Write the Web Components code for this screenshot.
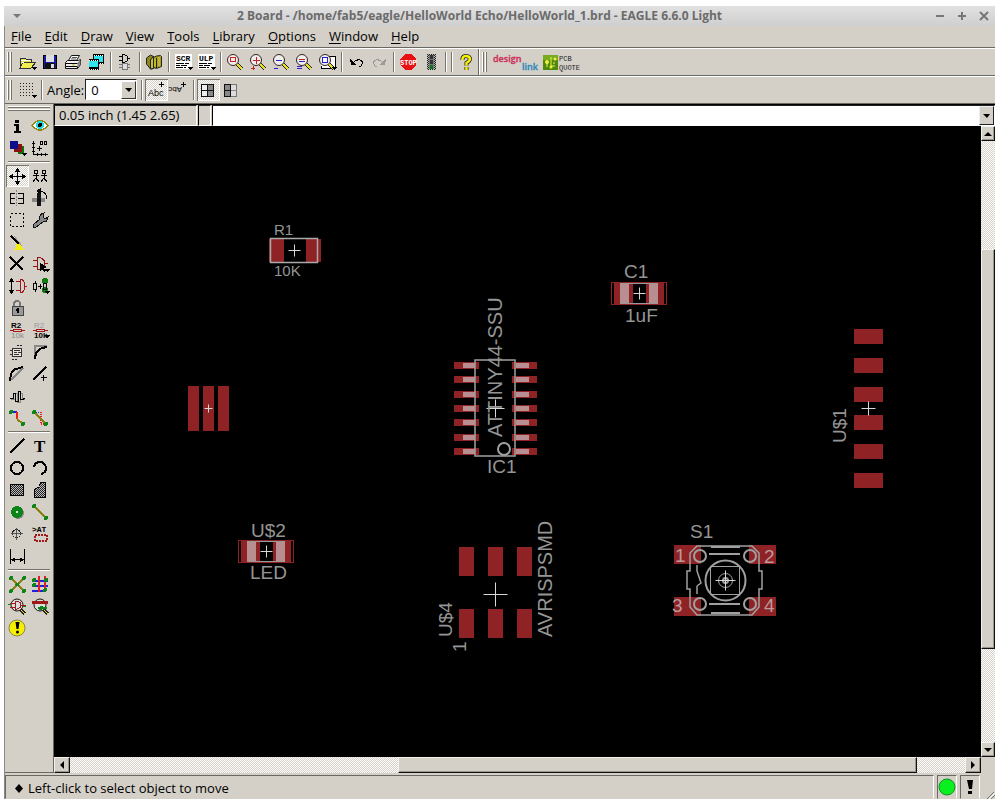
<!DOCTYPE html>
<html lang="en">
<head>
<meta charset="utf-8">
<title>2 Board - EAGLE 6.6.0 Light</title>
<style>
  :root {
    --face: #d4d0c8;
    --dark: #6a6862;
    --checker: repeating-conic-gradient(#fff 0 25%, #d4d0c8 0 50%) 0 0 / 2px 2px;
  }
  html, body { height: 100%; margin: 0; }
  body { background: #fff; font: 13px/18px "Open Sans", "Noto Sans", sans-serif; color: #000; }
</style>
</head>
<body>
<eagle-app></eagle-app>
<script>
const BLACK = 'stroke="#000" fill="none"';
const lens = '<path d="M12 12l6 6" stroke="#222" stroke-width="4"/><path d="M13 13l5 5" stroke="#e8e020" stroke-width="2"/><circle cx="9" cy="9" r="5.500" fill="#eee" stroke="#3a2020" shape-rendering="auto"/>';
const tri = '<path d="M15 16h6l-3 3z" fill="#000"/>';
const checkDefs = '<defs><pattern id="c" width="2" height="2" patternUnits="userSpaceOnUse"><rect width="2" height="2" fill="#bbb"/><path d="M0 0h1v1h-1zM1 1h1v1h-1z" fill="#222"/></pattern></defs>';
const dots = (pts, r, col) => pts.map(p => `<circle cx="${p[0]}" cy="${p[1]}" r="${r}" fill="${col}"/>`).join('');
const page = t => `<rect x="3" y="3" width="17" height="15" fill="#fff"/><text x="4" y="10" font-size="8" font-weight="bold" font-family="Liberation Mono, monospace">${t}</text><path d="M4 12.500h8m1 0h4M4 14.500h4m1 0h6M4 16.500h7m1 0h2" ${BLACK}/>${tri}`;
const person = x => `<circle cx="${x}" cy="7" r="2" ${BLACK}/><path d="M${x} 9v5M${x-3} 10.500h6M${x} 13l-3 4M${x} 13l3 4" ${BLACK}/>`;
const ICONS = {
  open: '<path d="M4 16V8l1-1h4l1 1h5v3" fill="#e4df50" stroke="#333"/><path d="M4 17l3-6h13l-5 6z" fill="#f2ee50" stroke="#333"/><path d="M5 9h9M6 11h2" stroke="#fff"/>' + tri,
  save: '<rect x="4" y="4" width="14" height="14" fill="#000"/><rect x="5" y="5" width="12" height="12" fill="#1c1ca0"/><rect x="7" y="4" width="8" height="7" fill="#ddd"/><rect x="6" y="12" width="10" height="6" fill="#111"/><rect x="12" y="13" width="3" height="4" fill="#ddd"/>',
  print: '<g shape-rendering="auto"><path d="M6.500 9.500l3-5h8l-3 5z" fill="#fff" stroke="#111"/><path d="M10 6.500h5M9 8h5" stroke="#555"/><path d="M3.500 11.500l2-2h11l2-1v5l-3 4h-12z" fill="#eee" stroke="#111"/><path d="M4 12.500h11.500l3-3M4 15.500h11.500v2" ' + BLACK + '/><path d="M15.500 12v4l3-3V9z" fill="#888"/><rect x="10" y="13.500" width="3" height="1" fill="#bb0"/></g>',
  film: '<rect x="8" y="3" width="11" height="10" fill="#000"/><rect x="9" y="5" width="9" height="6" fill="#2fe4ee"/><path d="M9 4h9M9 12h9" stroke="#fff" stroke-dasharray="1 1"/><rect x="4" y="8" width="10" height="11" fill="#000"/><rect x="4" y="10" width="9" height="6" fill="#2fe4ee"/><path d="M4 9h9M4 18h9" stroke="#fff" stroke-dasharray="1 1"/>',
  gate: '<path d="M5 5.500h3M5 9.500h3M8 3.500h2q4 1 4 4t-4 4H8zM14 7.500h2" '+BLACK+'/><path d="M8 12.500h5v6H8zM5 13.500h3M5 16.500h3M13 13.500h3M13 16.500h3" stroke="#777" fill="#ddd"/>',
  book: '<g shape-rendering="auto"><path d="M3.500 7l4-3 3 1.500v12l-3 .5-4-5z" fill="#8e8818" stroke="#222"/><path d="M7.500 9l3-4v12.500l-3 .5z" fill="#c8c030" stroke="#222"/><path d="M10.500 6.500l3-1.500 4-.5 1 1v10l-5 2-3-1z" fill="#a8a020" stroke="#222"/><path d="M13.500 7v10" stroke="#222"/><path d="M12 7.500v8M16 6v9" stroke="#d8d040"/></g>',
  scr: page('SCR'), ulp: page('ULP'),
  zfit: lens + '<rect x="6.500" y="6.500" width="5" height="4" fill="none" stroke="#c22"/>',
  zin: lens + '<path d="M6 9.500h7M9.500 6v7M4 17.500h4M6 15v4" stroke="#c02020"/>',
  zout: lens + '<path d="M6 9.500h6M4 17.500h4" stroke="#2020c0"/>',
  zredraw: lens + '<path d="M6 8.500h6" stroke="#c02020"/><path d="M6 10.500h6M4 15.500h5M4 17.500h5" stroke="#3020c0"/>',
  zsel: '<path d="M12 5h7v12H5v-2" fill="#fff" stroke="#000"/>' + lens + '<rect x="6.500" y="6.500" width="5" height="5" fill="#fff" stroke="#22c"/>' + tri,
  undo: '<path d="M5 8l1 6h6z" fill="#000"/><path d="M8 12q3-4 7-3t1 6l-2 1" stroke="#000" fill="none"/>',
  redo: '<path d="M18 8l-1 6h-6z" fill="#999"/><path d="M15 12q-3-4-7-3t-1 6l2 1" stroke="#999" fill="none"/>',
  stop: '<path d="M8 3h6l5 5v6l-5 5H8l-5-5V8z" fill="#e81010"/><text x="3" y="14" font-size="7" font-weight="bold" fill="#fff" font-family="Liberation Mono, monospace">STOP</text>',
  traffic: checkDefs + '<rect x="7" y="3" width="9" height="16" fill="url(#c)"/><rect x="9" y="4" width="5" height="14" fill="#777"/><circle cx="11.500" cy="6" r="2" fill="#333"/><circle cx="11.500" cy="11" r="2" fill="#333"/><circle cx="11.500" cy="16" r="2" fill="#087c18"/>',
  help: '<g shape-rendering="auto" fill="none"><path d="M7.500 9V7.500Q8 5 11 5t4 2.500q0 2.500-3.500 4.500v2.500M11.500 16v3" stroke="#222" stroke-width="4"/><path d="M7.500 9V7.500Q8 5 11 5t4 2.500q0 2.500-3.500 4.500v2.500M11.500 16v3" stroke="#f8f400" stroke-width="2.500"/></g>',
  grid: '<path d="M4 4.500h14M4 7.500h14M4 10.500h14M4 13.500h14M4 16.500h10" stroke="#222" stroke-dasharray="1 2"/>' + tri,
  abc: '<text x="3" y="17" font-size="9" font-family="Liberation Sans, sans-serif">Abc</text><path d="M14 5.500h5M16.500 3v5" stroke="#000"/>',
  abcflip: '<text x="-14" y="-8" transform="rotate(180)" font-size="8" font-family="Liberation Sans, sans-serif">Abc</text><path d="M13 5.500h5M15.500 3v5" stroke="#000"/>',
  split1: '<path d="M4.500 5.500h6v12h-6zM4 11.500h6" stroke="#111" fill="#eee"/><path d="M10.500 5.500h6v12h-6z" fill="#888" stroke="#111"/><path d="M10 11.500h7" stroke="#111"/>',
  split2: '<path d="M4.500 5.500h12v12h-12z" stroke="#777" fill="#ddd"/><path d="M4.500 5.500h6v12h-6z" fill="#888" stroke="#111"/><path d="M4 11.500h7" stroke="#111"/><path d="M11 11.500h6" stroke="#888"/>',
  info: '<rect x="9" y="5" width="4" height="3"/><path d="M8 9h5v7h2v2H8v-2h2v-5H8z"/>',
  eye: '<path d="M3 10.500q8-10 16 0q-8 9-16 0z" fill="#fff" stroke="#8a8a10" stroke-width="1.500"/><circle cx="11" cy="10" r="4" fill="#20d8e8"/><circle cx="11" cy="10" r="2" fill="#000"/>',
  layers: '<rect x="12" y="9" width="6" height="8" fill="#107010"/><rect x="8" y="7" width="8" height="8" fill="#8a1010"/><rect x="4" y="4" width="8" height="8" fill="#10108a"/>' + tri,
  mark: '<path d="M4.500 4v14M4 17.500h15" stroke="#000"/><path d="M3 6.500h3M3 10.500h3M3 14.500h3M8.500 16v3M12.500 16v3M16.500 16v3" stroke="#000"/><path d="M8 11.500h5M10.500 9v5" stroke="#000"/><path d="M11.500 4.500h2v3h-2zM15.500 4.500h2v3h-2z" '+BLACK+'/>',
  move: '<path d="M4 11.500h15M11.500 4v15" stroke="#000"/><path d="M3 11.500l4-3v6zM20 11.500l-4-3v6zM11.500 3l-3 4h6zM11.500 20l-3-4h6z"/>',
  copy: person(7) + person(15),
  mirror: '<path d="M9 6.500H4.500v10H9M4 11.500h5" '+BLACK+'/><path d="M10.500 3v16" stroke="#888" stroke-dasharray="2 1"/><path d="M12 6.500h5v10h-5M12 11.500h5" '+BLACK+'/>',
  rotate: '<rect x="8" y="6" width="4" height="13" fill="#111"/><rect x="3" y="11" width="13" height="4" fill="#888"/><rect x="8" y="11" width="4" height="4" fill="#111"/><path d="M8 4.500h5q5 2 5 7" '+BLACK+'/><path d="M7 4l5-3v6z"/>',
  group: '<rect x="4.500" y="4.500" width="13" height="13" fill="none" stroke="#000" stroke-dasharray="2 2"/>',
  wrench: '<path d="M4 16l7-6q-1-5 4-6l-1 4 2 2 3-2q0 5-5 5l-7 5-3 1z" fill="#888" stroke="#111"/>',
  change: '<path d="M5 5l9 9" stroke="#000" stroke-width="2"/><path d="M8 5l8 10" stroke="#999"/><path d="M10 13h4l4 6H7l3-2z" fill="#f4ee10"/>',
  delete: '<path d="M4 4l13 13M17 4L4 17" stroke="#000" stroke-width="2"/>',
  add: '<path d="M4 7.500h4M4 13.500h4M8 4.500h3q5 2 5 6t-5 6H8zM16 10.500h3" stroke="#8c1414" fill="none"/><path d="M11 10l7 4-3 1 2 3-2 1-2-3-2 2z"/>' + tri,
  pinswap: '<path d="M5.500 5v12" stroke="#000"/><path d="M5.500 3l-3 4h6zM5.500 19l-3-4h6z"/><path d="M10 6.500h4M10 15.500h4M14 4v14M14 4q5 1 5 7t-5 7M18 11h3" stroke="#a01818" fill="none"/>',
  replace: '<ellipse cx="16" cy="6" rx="3" ry="3" fill="#107c10"/><ellipse cx="16" cy="15" rx="3" ry="3" fill="#107c10"/><path d="M4.500 8.500h3v6h-3zM14.500 8.500h3v6h-3zM6 6v2M6 15v2M9 11.500h4M11.500 9v5" '+BLACK+'/>' + tri,
  lock: '<path d="M8 10V7q0-3 3-3t3 3v3" stroke="#777" stroke-width="2" fill="none"/><rect x="6" y="9" width="11" height="9" fill="#999" stroke="#444"/><path d="M11.500 11v5M10 12.500h3" stroke="#000" stroke-width="2"/>',
  name: '<text x="5" y="9" font-size="8" font-weight="bold" font-family="Liberation Sans, sans-serif">R2</text><path d="M4 11.500h15" stroke="#a01818"/><rect x="7.500" y="10.500" width="8" height="2" fill="#d4d0c8" stroke="#a01818"/><text x="5" y="19" font-size="8" fill="#888" font-family="Liberation Sans, sans-serif">10k</text>',
  value: '<text x="5" y="9" font-size="8" fill="#999" font-family="Liberation Sans, sans-serif">R2</text><path d="M4 11.500h15" stroke="#a01818"/><rect x="7.500" y="10.500" width="8" height="2" fill="#d4d0c8" stroke="#a01818"/><text x="5" y="19" font-size="8" font-weight="bold" font-family="Liberation Sans, sans-serif">10k</text>' + tri,
  smash: '<rect x="6.500" y="7.500" width="9" height="8" fill="#e8e4dc" stroke="#333"/><path d="M11 4.500h6M6 18.500h6" stroke="#222" stroke-dasharray="2 1"/><path d="M4 9.500h2M4 13.500h2M8 9.500h6M8 11.500h3M12 11.500h3M8 13.500h5" stroke="#333"/>',
  miter: '<path d="M6 18V5h12" stroke="#888" fill="none" stroke-width="2"/><path d="M6 18q0-11 12-12" stroke="#000" stroke-width="2" fill="none"/>',
  split: '<path d="M5 17L17 5" stroke="#888" stroke-width="2"/><path d="M4 18q1-12 6-12l7-2" stroke="#000" stroke-width="2" fill="none"/>',
  optimize: '<path d="M4 17L17 4" stroke="#000" stroke-width="2"/><path d="M12 14.500h6M14.500 12v6" stroke="#000"/>',
  meander: '<path d="M5 14.500h4v-6h2v9h3v-9h2v6h3" stroke="#888" fill="none"/><path d="M4 13.500h3v-5h2v8h3v-10h2v8h3v-1h2" '+BLACK+'/>',
  route: '<path d="M5 5h6" stroke="#2020e0" stroke-width="2"/><path d="M11 5v7" stroke="#f02010" stroke-width="2"/><path d="M11 12l6 5" stroke="#8a8010" stroke-width="2"/>' + dots([[5,5],[17,17]],2,'#0b8418'),
  ripup: '<path d="M5 5h7" stroke="#2020e0" stroke-dasharray="1 1"/><path d="M12 5v12h5" stroke="#e02020" stroke-dasharray="1 1" fill="none" stroke-width="2"/><path d="M5 5l12 12" stroke="#8a8010" stroke-width="2"/>' + dots([[5,5],[17,17]],2,'#0b8418'),
  wire: '<path d="M4 18L18 4" stroke="#000" stroke-width="2"/>',
  text: '<text x="5" y="17" font-size="17" font-weight="bold" font-family="Liberation Serif, serif">T</text>',
  circle: '<circle cx="11" cy="11" r="6" stroke="#000" stroke-width="2" fill="none"/>',
  arc: '<path d="M5 10q1-5 6-5t6 6q0 5-5 6" stroke="#000" stroke-width="2" fill="none"/>',
  rect: checkDefs + '<rect x="4.500" y="5.500" width="13" height="11" fill="url(#c)" stroke="#000"/>',
  polygon: checkDefs + '<path d="M5.500 18.500v-8l5-3 1-4h5v15z" fill="url(#c)" stroke="#000"/>',
  via: '<circle cx="12" cy="12" r="6" fill="#888"/><circle cx="11" cy="11" r="6" fill="#0b8418"/><rect x="10" y="10" width="2" height="2" fill="#ddd"/>',
  signal: '<path d="M5 5l12 12" stroke="#8a8010" stroke-width="1.500"/>' + dots([[5,5],[17,17]],2,'#0b8418'),
  hole: '<circle cx="10.500" cy="10.500" r="4" stroke="#222" fill="none"/><path d="M5 10.500h12M10.500 5v12" stroke="#555"/>',
  attribute: '<text x="3" y="9" font-size="8" font-family="Liberation Mono, monospace" font-weight="bold">&gt;AT</text><rect x="5.500" y="11.500" width="12" height="6" fill="none" stroke="#a01818" stroke-width="2" stroke-dasharray="2 1"/>',
  dimension: '<path d="M4.500 4v15M18.500 4v15M5 14.500h13" stroke="#000"/><path d="M5 14.500l4-2v5zM18 14.500l-4-2v5z"/>',
  ratsnest: '<path d="M5 5l13 13M18 5L5 18" stroke="#8a8010" stroke-width="1.500"/>' + dots([[5,5],[18,5],[5,18],[18,18],[11.5,11.5]],2,'#0b8418'),
  auto: '<path d="M3 7.500h16M5 12.500h14M3 17.500h14" stroke="#2020e0" stroke-width="2"/><path d="M9.500 3v16M15.500 3v16" stroke="#e02020" stroke-width="2"/>' + dots([[5,7],[17,7],[5,12],[16,17]],2,'#0b8418'),
  erc: '<path d="M14 14l5 5" stroke="#222" stroke-width="3"/><path d="M15 15l4 4" stroke="#e8e020"/><circle cx="11" cy="10" r="6" fill="#ddd" stroke="#111" shape-rendering="auto"/><path d="M4 8.500h5M4 12.500h5M9 6v8h2q4-1 4-4t-4-4zM15 10.500h5" stroke="#a01818" fill="none"/><path d="M2 9.500h3M17 11.500h3" stroke="#0b8418"/>',
  drc: '<path d="M14 14l5 5" stroke="#222" stroke-width="3"/><path d="M15 15l4 4" stroke="#e8e020"/><circle cx="11" cy="10" r="6" fill="#ddd" stroke="#111" shape-rendering="auto"/><path d="M3 7.500h16" stroke="#a01818" stroke-width="3"/><path d="M9 12.500h9" stroke="#0b8418" stroke-width="2"/>' + dots([[12,13]],2,'#0b8418'),
  errors: '<g shape-rendering="auto"><circle cx="11" cy="11" r="8" fill="#f6f000" stroke="#8a8a40"/><path d="M9.500 5h4l-1 7h-2z"/><circle cx="11.500" cy="15" r="1.500"/></g>'
};

function define(tag, markup, setup) {
  const template = document.createElement('template');
  template.innerHTML = markup;
  customElements.define(tag, class extends HTMLElement {
    constructor() {
      super();
      this.attachShadow({ mode: 'open' }).append(template.content.cloneNode(true));
    }
    connectedCallback() { if (setup) setup(this, this.shadowRoot); }
  });
}

define('tool-button', `<style>
  :host { display: block; width: 23px; height: 22px; flex: none; }
  button { display: block; width: 100%; height: 100%; padding: 0; border: 0; background: none; }
  :host([pressed]) button { background: var(--checker); box-shadow: inset 1px 1px #77746c, inset -1px -1px #fff; }
  svg { display: block; width: 23px; height: 22px; }
</style><button type="button"><svg viewBox="0 0 23 22" shape-rendering="crispEdges" aria-hidden="true"></svg></button>`,
(host, root) => {
  const n = host.getAttribute('name');
  root.querySelector('svg').innerHTML = ICONS[n];
  root.querySelector('button').setAttribute('aria-label', host.getAttribute('label') || n);
  if (host.hasAttribute('pressed')) root.querySelector('button').setAttribute('aria-pressed', 'true');
});

define('tool-rule', `<style>
  :host { display: flex; justify-content: center; width: 6px; height: 20px; flex: none; }
  i { width: 1px; background: #77746c; border-right: 1px solid #fff; }
  :host([flat]) { width: auto; height: 6px; align-items: center; padding: 0 2px; grid-column: 1 / -1; }
  :host([flat]) i { width: 100%; height: 1px; border: 0; border-bottom: 1px solid #fff; }
</style><i></i>`);

define('tool-grip', `<style>
  :host { display: flex; gap: 1px; width: 11px; height: 20px; padding-left: 2px; box-sizing: border-box; flex: none; }
  i { width: 1px; background: #fff; border-right: 1px solid #77746c; }
  :host([flat]) { flex-direction: column; width: auto; height: 11px; padding: 2px 2px 0; grid-column: 1 / -1; }
  :host([flat]) i { width: 100%; height: 1px; border: 0; border-bottom: 1px solid #77746c; }
</style><i></i><i></i>`);

define('title-bar', `<style>
  :host { display: flex; align-items: center; height: 20px; background: linear-gradient(#e1e1e1, #cfcfcf); color: #6b6b6b; }
  h1 { flex: 1; margin: 0; text-align: center; font-size: 12px; line-height: 20px; font-weight: 700; white-space: nowrap; overflow: hidden; }
  button { width: 22px; height: 20px; padding: 0; border: 0; background: none; color: inherit; }
  .menu { width: 26px; }
  svg { display: block; margin: auto; }
</style>
<button class="menu" aria-label="Window menu"><svg width="8" height="5"><path d="M0 0h8l-4 4z" fill="#777"/></svg></button>
<h1><slot></slot></h1>
<button aria-label="Minimize"><svg width="10" height="10"><path d="M1 5h8" stroke="#777" stroke-width="2"/></svg></button>
<button aria-label="Maximize"><svg width="10" height="10"><path d="M1 5h8M5 1v8" stroke="#777" stroke-width="2"/></svg></button>
<button aria-label="Close"><svg width="10" height="10"><path d="M1 1l8 8M9 1l-8 8" stroke="#777" stroke-width="2"/></svg></button>`);

define('menu-entry', `<style>
  :host { display: block; }
  button { display: block; border: 0; padding: 0; background: none; font: inherit; color: inherit; line-height: 21px; }
</style><button type="button"><slot></slot></button>`);

define('menu-strip', `<style>
  :host { display: flex; gap: 13px; height: 21px; padding: 0 6px; }
</style><slot></slot>`);

define('tool-strip', `<style>
  :host { display: flex; align-items: center; height: 27px; border-top: 1px solid var(--dark); box-shadow: inset 0 1px #fff; }
</style><slot></slot>`);

define('angle-select', `<style>
  :host { display: flex; align-items: center; padding-left: 2px; gap: 1px; margin-right: 2px; }
  .box { display: grid; }
  select { grid-area: 1 / 1; appearance: none; width: 52px; height: 21px; padding: 0 0 0 5px; font: inherit; color: #000; background: #fff; border: 1px solid; border-color: #222 #fff #fff #222; border-radius: 0; }
  span { grid-area: 1 / 1; justify-self: end; align-self: center; display: grid; place-items: center; width: 15px; height: 18px; background: var(--face); border: 1px solid; border-color: #fff #333 #333 #fff; box-sizing: border-box; margin-right: 1px; pointer-events: none; }
</style><label for="a">Angle:</label><div class="box"><select id="a"><option>0</option><option>45</option><option>90</option></select><span><svg width="7" height="4"><path d="M0 0h7l-3 4z"/></svg></span></div>`);

define('partner-links', `<style>
  :host { display: flex; align-items: center; gap: 4px; margin-left: 2px; }
  a { display: block; color: inherit; }
  svg { display: block; }
</style>
<a href="#design-link" aria-label="design link"><svg width="46" height="24" font-family="Open Sans, sans-serif" font-weight="600">
  <text x="0" y="12" font-size="9" fill="#cc2c58" stroke="#cc2c58" stroke-width=".3">design</text>
  <text x="29" y="20" font-size="9" fill="#2c88b8" stroke="#2c88b8" stroke-width=".3">link</text></svg></a>
<a href="#pcb-quote" aria-label="PCB quote"><svg width="40" height="24" font-family="Liberation Mono, monospace" font-size="7" fill="#222">
  <rect y="5" width="15" height="15" fill="#4f8a10"/><rect y="5" width="15" height="5" fill="#78ac20"/>
  <path d="M4 12v5M8 7v9M8 16h4M11 12v2" stroke="#eef040" fill="none"/><circle cx="4" cy="12" r="2" fill="#eef040"/><circle cx="12" cy="9" r="1.500" fill="#eef040"/><circle cx="8" cy="17" r="1.500" fill="#eef040"/>
  <text x="16" y="11">PCB</text><text x="16" y="20">QUOTE</text></svg></a>`);

define('side-palette', `<style>
  :host { display: grid; grid-template-columns: 23px 23px; align-content: start; padding: 0 1px; border-right: 1px solid var(--dark); border-bottom: 1px solid var(--dark); }
</style><slot></slot>`);

define('command-line', `<style>
  :host { display: flex; height: 22px; gap: 1px; box-sizing: border-box; border-top: 1px solid #000; background: var(--face); }
  div, .entry { box-sizing: border-box; border: 1px solid; border-color: #222 #fff #fff #000; }
  div { width: 143px; padding-left: 4px; line-height: 19px; white-space: nowrap; }
  .gap { width: 13px; padding: 0; }
  .entry { display: flex; flex: 1; background: #fff; }
  input { flex: 1; min-width: 0; border: 0; outline: 0; padding: 0 4px; font: inherit; background: #fff; }
  button { width: 15px; padding: 0; background: var(--face); border: 1px solid; border-color: #eee #222 #222 #eee; }
  svg { display: block; margin: auto; }
</style><div>0.05 inch (1.45 2.65)</div><div class="gap"></div>
<span class="entry"><input type="text" aria-label="Command"><button aria-label="Command history"><svg width="7" height="4"><path d="M0 0h7l-3 4z"/></svg></button></span>`);

define('scroll-strip', `<style>
  :host { display: flex; min-width: 0; min-height: 0; background: var(--checker); }
  :host([vertical]) { flex-direction: column; }
  button, .thumb { box-sizing: border-box; background: var(--face); border: 1px solid; border-color: #f4f2ee #111 #111 #f4f2ee; box-shadow: inset -1px -1px #99958c; }
  button { flex: none; width: 16px; height: 16px; padding: 0; }
  :host([vertical]) button { width: 14px; height: 15px; }
  svg { display: block; margin: auto; }
  .before { flex: 329; } .thumb { flex: 518; } .after { flex: 48; }
  :host([vertical]) .before { flex: 108; } :host([vertical]) .thumb { flex: 400; } :host([vertical]) .after { flex: 93; }
</style><button aria-label="Scroll back"><svg width="8" height="8"><path/></svg></button><span class="before"></span><span class="thumb"></span><span class="after"></span><button aria-label="Scroll forward"><svg width="8" height="8"><path/></svg></button>`,
(host, root) => {
  const v = host.hasAttribute('vertical');
  const p = root.querySelectorAll('path');
  p[0].setAttribute('d', v ? 'M0 6h8l-4-4z' : 'M6 0v8l-4-4z');
  p[1].setAttribute('d', v ? 'M0 2h8l-4 4z' : 'M2 0v8l4-4z');
});

const RED = '#8e2225', PINK = '#b78f90';
const R = (x, y, w, h, f = RED) => `<rect x="${x}" y="${y}" width="${w}" height="${h}" fill="${f}"/>`;
const X = (x, y, a) => `<path d="M${x - a} ${y}h${2 * a}M${x} ${y - a}v${2 * a}" stroke="#d8d8d8"/>`;
const V = (x, y, s, t) => `<text transform="translate(${x} ${y}) rotate(-90)" font-size="${s}">${t}</text>`;
const chip = (x, y) => `<g transform="translate(${x} ${y})">
  <rect x=".5" y=".5" width="55" height="22" fill="none" stroke="${RED}"/>${R(3,1,50,21)}${R(9,1,9,21,PINK)}${R(38,1,9,21,PINK)}${R(22,1,13,21,'#000')}
  <path d="M9 1.500h38M9 21.500h38" stroke="#999"/>${X(28.5,11.5,6)}</g>`;
let pads = '';
for (const y of [362, 376, 391, 405, 419, 434, 448]) pads += R(454,y,25,7) + R(463,y+1,12,5,PINK) + R(512,y,25,7) + R(516,y+1,13,5,PINK);
for (const x of [188, 203, 218]) pads += R(x,386,11,45);
for (const x of [459, 488, 517]) pads += R(x,547,15,29) + R(x,609,15,29);
for (const y of [329, 358, 387, 415, 444, 473]) pads += R(854,y,29,15);
for (const x of [674, 749]) pads += R(x,545,27,19) + R(x,597,27,19);

define('board-canvas', `<style>
  :host { display: block; min-width: 0; min-height: 0; background: #000; overflow: hidden; }
  svg { display: block; width: 100%; height: 100%; }
</style>
<svg viewBox="54 126 927 631" role="img" aria-label="Board layout" font-family="Liberation Sans, Arial, sans-serif" font-size="19" fill="#959595">
  ${pads}
  ${R(269,239,15,23)}${R(306,239,15,23)}<rect x="270.500" y="238.500" width="47" height="24" fill="none" stroke="#aaa" stroke-width="1.500"/>${X(294.5,250.5,6)}
  <text x="274" y="235" font-size="15">R1</text><text x="274" y="276" font-size="15">10K</text>
  ${X(208.5,408.5,4)}
  ${chip(238,540)}${chip(611,282)}
  <text x="251" y="537">U$2</text><text x="250" y="579">LED</text>
  <text x="624" y="278">C1</text><text x="625" y="322">1uF</text>
  <rect x="475" y="360" width="40" height="96" fill="none" stroke="#a0a0a0" stroke-width="1.500"/><circle cx="504" cy="449" r="6" fill="none" stroke="#a0a0a0" stroke-width="2"/>
  ${X(495.5,408.5,9)}<text x="487" y="473">IC1</text>${V(502,437,20,'ATTINY44-SSU')}
  ${X(495.5,594.5,12)}${V(552,637,20,'AVRISPSMD')}${V(452,637,19,'U$4')}${V(466,652,19,'1')}
  ${X(868.5,408.5,7)}${V(846,443,19,'U$1')}
  <text x="690" y="538">S1</text>
  <g fill="none" stroke="#a0a0a0" stroke-width="2">
    <path d="M697 546h55l7 7v18h3v18h-3v18l-7 8h-55l-7-8v-18h-3v-18h3v-18z" stroke-width="1.500"/>
    <path d="M711 547h29M709 554h31M709 604h31M711 613h29"/>
    <circle cx="700" cy="556" r="6"/><circle cx="750" cy="556" r="6"/><circle cx="700" cy="604" r="6"/><circle cx="750" cy="604" r="6"/>
    <circle cx="725.500" cy="580.500" r="20"/>
    <path d="M697 565v6l4 12-4 3M697 586v8" stroke-width="1.500"/>
    <path d="M710.500 566.500h29v28h-29z" stroke-width="1"/>
    <circle cx="725.500" cy="580.500" r="7" stroke-width="1"/><circle cx="725.500" cy="580.500" r="2.500"/>
  </g>${X(725.5,580.5,10)}
  <g fill="#bb9a9a"><text x="675" y="562">1</text><text x="764" y="563">2</text><text x="672" y="612">3</text><text x="764" y="612">4</text></g>
</svg>`);

define('status-line', `<style>
  :host { display: flex; gap: 3px; height: 24px; margin-top: 2px; line-height: 25px; }
  div { box-sizing: border-box; border: 1px solid; border-color: var(--dark) #fff transparent var(--dark); }
  .msg { flex: 1; padding-left: 8px; white-space: nowrap; display: flex; gap: 4px; }
  .lamp { width: 20px; display: grid; place-items: center; }
  .size { width: 12px; border: 0; display: flex; align-items: end; justify-content: end; }
  svg { display: block; }
  .msg svg { margin-top: 7px; }
</style><div class="msg"><svg width="10" height="11" aria-hidden="true"><path d="M5 1l4 4.500-4 4.500-4-4.500z"/></svg><span><slot></slot></span></div>
<div class="lamp"><svg width="18" height="18"><circle cx="9" cy="9" r="8" fill="#08f020" stroke="#159020"/></svg></div>
<div class="lamp"><svg width="18" height="18"><path d="M6 2h6l-1 9H8z"/><rect x="7" y="13" width="4" height="3"/></svg></div>
<div class="size"><svg width="8" height="7"><path d="M0 7l7-7M4 7l4-4" stroke="#777" /><path d="M2 7l6-6" stroke="#fff"/></svg></div>`);

const B = (n, extra = '') => n.split(' ').map(x => `<tool-button name="${x}" ${extra}></tool-button>`).join('');
const S = '<tool-rule></tool-rule>', F = '<tool-rule flat></tool-rule>';
const menus = ['File','Edit','Draw','View','Tools','Library','Options','Window','Help'].map(m => `<menu-entry><u>${m[0]}</u>${m.slice(1)}</menu-entry>`).join('');

define('eagle-app', `<style>
  :host { display: flex; box-sizing: border-box; height: 100%; min-height: 400px; padding: 6px 4px; }
  main { flex: 1; min-width: 0; display: flex; flex-direction: column; background: var(--face); }
  .body { flex: 1; min-width: 0; display: flex; flex-direction: column; border-left: 1px solid #8c8a84; }
  u { text-underline-offset: 2px; }
  .work { flex: 1; min-height: 0; display: grid; grid-template: 22px minmax(0, 1fr) 16px / auto minmax(0, 1fr) 14px; border-top: 1px solid var(--dark); }
  side-palette { grid-row: 1 / -1; }
  command-line { grid-column: 2 / -1; }
  .plugin { display: flex; align-items: center; border-left: 1px solid var(--dark); box-shadow: inset 1px 0 #fff; padding-left: 1px; height: 26px; }
</style>
<main>
  <title-bar>2 Board - /home/fab5/eagle/HelloWorld Echo/HelloWorld_1.brd - EAGLE 6.6.0 Light</title-bar>
  <div class="body">
    <menu-strip>${menus}</menu-strip>
    <tool-strip><tool-grip></tool-grip>${B('open save print film')}${S}${B('gate')}${S}${B('book')}${S}${B('scr ulp')}${S}${B('zfit zin zout zredraw zsel')}${S}${B('undo redo')}${S}${B('stop traffic')}${S}${S}${B('help')}<span class="plugin"><tool-grip></tool-grip><partner-links></partner-links></span></tool-strip>
    <tool-strip><tool-grip></tool-grip>${B('grid')}${S}<angle-select></angle-select>${S}${B('abc','pressed')}${B('abcflip')}${S}${B('split1','pressed')}${B('split2')}</tool-strip>
    <div class="work">
      <side-palette><tool-grip flat></tool-grip>${B('info eye layers mark')}${F}${B('move','pressed')}${B('copy mirror rotate group wrench change')}<span></span>${B('delete add pinswap replace lock')}<span></span>${B('name value smash miter split optimize meander')}<span></span>${B('route ripup')}${F}${B('wire text circle arc rect polygon via signal hole attribute dimension')}<span></span>${F}${B('ratsnest auto erc drc errors')}</side-palette>
      <command-line></command-line>
      <board-canvas></board-canvas>
      <scroll-strip vertical></scroll-strip>
      <scroll-strip></scroll-strip>
    </div>
    <status-line>Left-click to select object to move</status-line>
  </div>
</main>`);
</script>
</body>
</html>
